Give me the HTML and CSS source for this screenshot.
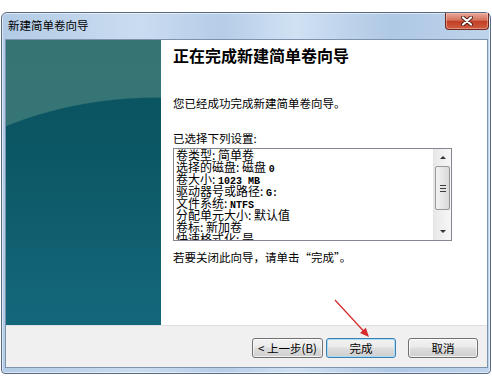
FILE: index.html
```html
<!DOCTYPE html>
<html lang="zh-CN">
<head>
    <meta charset="UTF-8">
    <title>新建简单卷向导</title>
    <link rel="stylesheet" href="styles.css">
</head>
<body>
    <div class="window">
        <div class="titlebar">
            <span class="title">新建简单卷向导</span>
            <button class="close">
                <svg width="12" height="10" viewBox="0 0 12 10">
                    <path d="M2 1.5 L10 8.5 M10 1.5 L2 8.5" stroke="#4b1d16" stroke-width="4" stroke-linecap="round"/>
                    <path d="M2 1.5 L10 8.5 M10 1.5 L2 8.5" stroke="#fff" stroke-width="2.2" stroke-linecap="round"/>
                </svg>
            </button>
        </div>
        <div class="client">
            <div class="main">
                <div class="side"></div>
                <div class="page">
                    <h1>正在完成新建简单卷向导</h1>
                    <p class="intro">您已经成功完成新建简单卷向导。</p>
                    <p class="label">已选择下列设置:</p>
                    <div class="listbox">
                        <div class="lines">
                            <div class="line">卷类型: 简单卷</div>
                            <div class="line">选择的磁盘: 磁盘 <span class="v">0</span></div>
                            <div class="line">卷大小: <span class="v">1023 MB</span></div>
                            <div class="line">驱动器号或路径: <span class="v">G:</span></div>
                            <div class="line">文件系统: <span class="v">NTFS</span></div>
                            <div class="line">分配单元大小: 默认值</div>
                            <div class="line">卷标: 新加卷</div>
                            <div class="line">快速格式化: 是</div>
                        </div>
                        <div class="scrollbar">
                            <div class="arrow-btn"><span class="tri up"></span></div>
                            <div class="thumb"><span class="grip"></span></div>
                            <div class="track"></div>
                            <div class="arrow-btn"><span class="tri down"></span></div>
                        </div>
                    </div>
                    <p class="hint">若要关闭此向导，请单击“完成”。</p>
                </div>
            </div>
            <div class="footer">
                <button class="btn back">&lt; 上一步(B)</button>
                <button class="btn default">完成</button>
                <button class="btn cancel">取消</button>
            </div>
        </div>
    </div>

    <!-- red annotation arrow pointing at the finish button -->
    <svg class="annotation" width="492" height="376" viewBox="0 0 492 376">
        <line x1="335" y1="300" x2="364" y2="331.5" stroke="#d42a2a" stroke-width="1.2"/>
        <polygon points="369,337 360,333.1 365.8,327.7" fill="#d42a2a"/>
    </svg>
</body>
</html>
```

FILE: styles.css
```css
body {
    margin: 0;
    background: #fff;
    font-family: "Noto Sans CJK SC", sans-serif;
    font-size: 11.5px;
    color: #000;
}
.window {
    margin: 12px 0 0 1px;
    width: 490px;
    height: 362px;
    box-sizing: border-box;
    border: 1px solid #596b82;
    border-radius: 6px 6px 4px 4px;
    background: linear-gradient(to right, #b2cbe6 0%, #cadcf0 28%, #b6cde8 45%, #d0e1f3 60%, #afc8e4 80%, #bed4ec 100%);
    box-shadow: inset 0 0 0 1px rgba(255, 255, 255, 0.55);
    display: flex;
    flex-direction: column;
}
.titlebar {
    height: 27px;
    display: flex;
    align-items: flex-start;
    padding: 0 1px 0 6px;
}
.title {
    margin-top: 4px;
    line-height: 16px;
}
.close {
    margin-left: auto;
    width: 44px;
    height: 17px;
    padding: 0;
    border: 1px solid #6e2a20;
    border-top: none;
    border-radius: 0 0 4px 4px;
    background: linear-gradient(#e9a897, #d4735d 45%, #c13f27 52%, #cf5c40 100%);
    box-shadow: inset 0 0 0 1px rgba(255, 210, 200, 0.45);
    display: flex;
    align-items: center;
    justify-content: center;
}
.client {
    flex: 1;
    margin: 0 3px 6px 4px;
    background: #fff;
    box-shadow: 0 0 0 1px #7d93ab;
    display: flex;
    flex-direction: column;
}
.main {
    height: 285px;
    display: flex;
}
.side {
    width: 155px;
    background:
        radial-gradient(ellipse 330px 260px at 150px 317px, rgba(0, 0, 0, 0) 99.5%, rgba(125, 170, 150, 0.38) 100%),
        linear-gradient(#0a525e, #0c5765 40%, #14687b);
}
.page {
    flex: 1;
    padding: 5px 12px 0;
}
h1 {
    margin: 0;
    font-size: 16px;
    line-height: 20px;
    font-weight: bold;
}
.intro {
    margin: 30px 0 0;
    line-height: 16px;
}
.label {
    margin: 19px 0 0;
    line-height: 16px;
}
.listbox {
    margin-top: 2px;
    width: 279px;
    height: 93px;
    box-sizing: border-box;
    border: 1px solid #828790;
    display: flex;
    overflow: hidden;
}
.lines {
    flex: 1;
    padding-left: 2px;
    font-size: 12px;
    overflow: hidden;
    white-space: nowrap;
}
.line {
    height: 12px;
    line-height: 12px;
}
.v {
    font-family: "Liberation Mono", monospace;
    font-size: 10px;
    font-weight: bold;
    line-height: 12px;
}
.scrollbar {
    width: 17px;
    background: linear-gradient(to right, #e8e8e8, #f7f7f7);
    border-left: 1px solid #e2e2e2;
    display: flex;
    flex-direction: column;
}
.arrow-btn {
    height: 17px;
    display: flex;
    align-items: center;
    justify-content: center;
}
.tri {
    width: 0;
    height: 0;
    border-left: 3px solid transparent;
    border-right: 3px solid transparent;
}
.tri.up {
    border-bottom: 3px solid #333;
}
.tri.down {
    border-top: 3px solid #333;
}
.thumb {
    height: 44px;
    margin: 0 1px;
    box-sizing: border-box;
    border: 1px solid #979797;
    border-radius: 2px;
    background: linear-gradient(to right, #f3f3f3, #e6e6e6 50%, #d9d9d9);
    display: flex;
    align-items: center;
    justify-content: center;
}
.grip {
    width: 6px;
    height: 7px;
    background: repeating-linear-gradient(#3c3c3c 0 1px, transparent 1px 3px);
}
.track {
    flex: 1;
}
.hint {
    margin: 8px 0 0;
    line-height: 16px;
}
.footer {
    flex: 1;
    border-top: 1px solid #dfdfdf;
    background: #f0f0f0;
    display: flex;
    justify-content: flex-end;
    align-items: flex-start;
    padding: 12px 9px 0 0;
}
.btn {
    height: 20px;
    padding: 0;
    font-family: inherit;
    font-size: 11.5px;
    line-height: 18px;
    color: #000;
    border: 1px solid #707070;
    border-radius: 3px;
    background: linear-gradient(#f2f2f2 0%, #ebebeb 45%, #dddddd 50%, #cfcfcf 100%);
    box-shadow: inset 0 0 0 1px rgba(255, 255, 255, 0.7);
}
.back {
    width: 71px;
}
.default {
    width: 70px;
    margin-left: 3px;
    border-color: #3c7fb1;
    box-shadow: inset 0 0 0 1px #a9dcf6;
}
.cancel {
    width: 70px;
    margin-left: 12px;
}
.annotation {
    position: absolute;
    left: 0;
    top: 0;
    pointer-events: none;
}
```
